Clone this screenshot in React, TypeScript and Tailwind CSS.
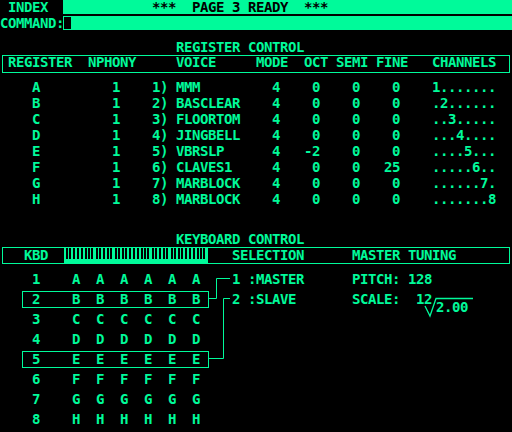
const G = '#00fa9a'

// place strings at character columns (8px grid)
function line(parts: [number, string][], from = 0) {
  let s = ''
  for (const [c, t] of parts) {
    const at = c - from
    if (s.length < at) s += ' '.repeat(at - s.length)
    s += t
  }
  return s
}

const regs = [
  ['A', '1', '1) MMM', '4', '0', '0', '0', '1.......'],
  ['B', '1', '2) BASCLEAR', '4', '0', '0', '0', '.2......'],
  ['C', '1', '3) FLOORTOM', '4', '0', '0', '0', '..3.....'],
  ['D', '1', '4) JINGBELL', '4', '0', '0', '0', '...4....'],
  ['E', '1', '5) VBRSLP', '4', '-2', '0', '0', '....5...'],
  ['F', '1', '6) CLAVES1', '4', '0', '0', '25', '.....6..'],
  ['G', '1', '7) MARBLOCK', '4', '0', '0', '0', '......7.'],
  ['H', '1', '8) MARBLOCK', '4', '0', '0', '0', '.......8'],
]

const kbdRows = ['A', 'B', 'C', 'D', 'E', 'F', 'G', 'H']
const selected = [2, 5]

function regLine(r: string[]) {
  return line([
    [4, r[0]],
    [14, r[1]],
    [19, r[2]],
    [34, r[3]],
    [40 - r[4].length, r[4]],
    [44, r[5]],
    [50 - r[6].length, r[6]],
    [54, r[7]],
  ])
}

// black key marks on the little keyboard
const keyBars: number[] = []
for (let o = 0; o < 8; o++) {
  const base = o * 18.67
  for (const d of [0, 3.33, 6.67, 11.33, 14.67]) {
    const x = Math.round(base + d + 2)
    if (x < 142) keyBars.push(x)
  }
}

function Keyboard() {
  return (
    <svg width="144" height="17" className="block -my-px">
      <rect x="0" y="0" width="144" height="17" fill={G} />
      {keyBars.map((x) => (
        <rect key={x} x={x} y="1" width="2" height="11" fill="#000" />
      ))}
    </svg>
  )
}

export default function App() {
  const mono = "font-['DejaVu_Sans_Mono',monospace] font-bold text-[14px] tracking-[-0.4287px] whitespace-pre"

  return (
    <div className={`relative w-[512px] h-[432px] bg-black overflow-hidden text-[#00fa9a] ${mono}`}>
      {/* index bar */}
      <div className="flex h-[14px] leading-[14px]">
        <div className="w-[63px] pl-[8px]">INDEX</div>
        <div className="flex-1 bg-[#00fa9a] text-black pl-px">
          {line([[19, '***'], [24, 'PAGE 3 READY'], [38, '***']], 8)}
        </div>
      </div>

      {/* command line */}
      <div className="flex h-[14px] leading-[14px] mt-[2px]">
        <div className="w-[63px]">COMMAND:</div>
        <div className="flex-1 bg-[#00fa9a] pl-px pt-px">
          <div className="w-[7px] h-[12px] bg-black" />
        </div>
      </div>

      {/* register control */}
      <div className="mt-[9px] leading-[16px]">{line([[22, 'REGISTER CONTROL']])}</div>
      <div className="mx-[2px] h-[18px] border border-[#00fa9a] leading-[13px] pl-[5px]">
        {line(
          [
            [1, 'REGISTER'],
            [11, 'NPHONY'],
            [22, 'VOICE'],
            [32, 'MODE'],
            [38, 'OCT'],
            [42, 'SEMI'],
            [47, 'FINE'],
            [54, 'CHANNELS'],
          ],
          1
        )}
      </div>
      <div className="mt-[6px] leading-[16px]">
        {regs.map((r) => (
          <div key={r[0]}>{regLine(r)}</div>
        ))}
      </div>

      {/* keyboard control */}
      <div className="mt-[24px] leading-[16px]">{line([[22, 'KEYBOARD CONTROL']])}</div>
      <div className="mx-[2px] h-[17px] border border-[#00fa9a] flex leading-[15px]">
        <div className="w-[61px] pl-[21px]">KBD</div>
        <Keyboard />
        <div>{line([[29, 'SELECTION'], [44, 'MASTER TUNING']], 26)}</div>
      </div>

      <div className="mt-[5px]">
        {kbdRows.map((l, i) => {
          const n = i + 1
          const sel = selected.includes(n)
          return (
            <div key={l} className="flex h-[20px] pl-[22px]">
              <div
                className={`w-[187px] h-[17px] mt-[2px] border pl-[9px] leading-[15px] ${
                  sel ? 'border-[#00fa9a]' : 'border-transparent'
                }`}
              >
                {line([[4, String(n)], [9, l], [12, l], [15, l], [18, l], [21, l], [24, l]], 4)}
              </div>
              {n === 1 && (
                <div className="ml-[23px] leading-[20px]">
                  {line([[29, '1 :MASTER'], [44, 'PITCH: 128']], 29)}
                </div>
              )}
              {n === 2 && (
                <>
                  <div className="ml-[23px] leading-[20px]">
                    {line([[29, '2 :SLAVE'], [44, 'SCALE:  12']], 29)}
                  </div>
                  <div className="ml-[4px] pt-[8px] leading-[20px]">2.00</div>
                </>
              )}
            </div>
          )
        })}
      </div>

      {/* connector lines and radical sign */}
      <svg className="absolute left-0 top-0 pointer-events-none" width="512" height="432">
        <g fill="none" stroke={G} strokeWidth="1">
          <polyline points="208,298.5 216.5,298.5 216.5,278.5 230,278.5" />
          <polyline points="208,358.5 223.5,358.5 223.5,298.5 230,298.5" />
        </g>
        <polyline
          points="425,306 430,316 436,298.5 473,298.5"
          fill="none"
          stroke={G}
          strokeWidth="1.3"
        />
      </svg>
    </div>
  )
}
